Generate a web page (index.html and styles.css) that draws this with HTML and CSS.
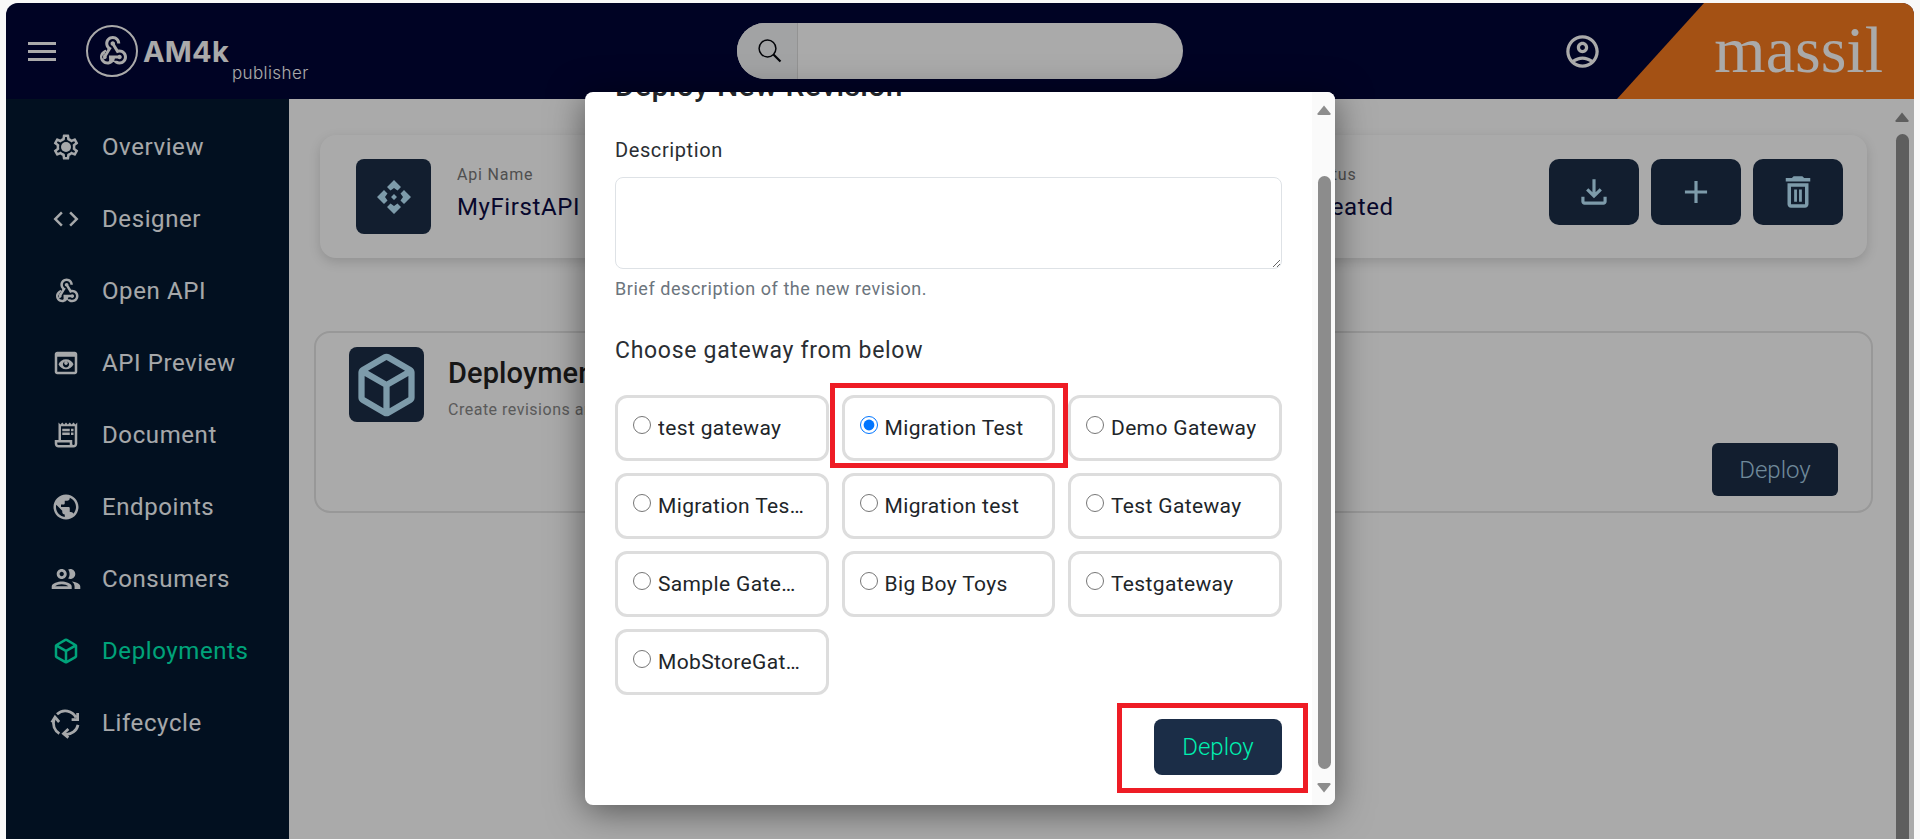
FILE: index.html
```html
<!DOCTYPE html>
<html lang="en">
<head>
  <meta charset="UTF-8" />
  <title>Deployments - AM4k publisher</title>
  <link rel="stylesheet" href="styles.css">
</head>
<body>
  <svg class="defs" width="0" height="0">
    <symbol id="i-webhook" viewBox="0 0 24 24"><path d="M10,15l5.88,0.01c0.27-0.31,0.67-0.51,1.12-0.51c0.83,0,1.5,0.67,1.5,1.5s-0.67,1.5-1.5,1.5c-0.44,0-0.84-0.19-1.12-0.5L13.95,17c-0.46,2.28-2.48,4-4.9,4C6.29,21,4,18.76,4,16c0-2.42,1.72-4.44,4-4.9v2.07c-1.16,0.41-2,1.53-2,2.83c0,1.65,1.35,3,3,3S10,17.65,10,16V15z M12.5,4c1.65,0,3,1.35,3,3h2c0-2.76-2.24-5-5-5l0,0c-2.76,0-5,2.24-5,5c0,1.43,0.6,2.71,1.55,3.62l-2.35,3.9C6.02,14.66,5.5,15.26,5.5,16c0,0.83,0.67,1.5,1.5,1.5s1.5-0.67,1.5-1.5c0-0.16-0.02-0.31-0.07-0.45l3.38-5.63C10.49,9.61,9.5,8.42,9.5,7C9.5,5.35,10.85,4,12.5,4z M17,13c-0.64,0-1.23,0.2-1.72,0.54l-3.05-5.07C11.53,8.35,11,7.74,11,7c0-0.83,0.67-1.5,1.5-1.5S14,6.17,14,7c0,0.15-0.02,0.29-0.06,0.43l2.19,3.65C16.41,11.03,16.7,11,17,11l0,0c2.76,0,5,2.24,5,5c0,2.76-2.24,5-5,5c-1.85,0-3.47-1.01-4.33-2.5h2.67C15.82,18.81,16.39,19,17,19c1.65,0,3-1.35,3-3S18.65,13,17,13z"/></symbol>
    <symbol id="i-cube" viewBox="0 -960 960 960"><path d="M440-183v-274L200-596v274l240 139Zm80 0 240-139v-274L520-457v274Zm-40-343 237-137-237-137-237 137 237 137ZM160-252q-19-11-29.5-29T120-321v-318q0-22 10.5-40t29.5-29l280-161q19-11 40-11t40 11l280 161q19 11 29.5 29t10.5 40v318q0 22-10.5 40T800-252L520-91q-19 11-40 11t-40-11L160-252Z"/></symbol>
    <symbol id="i-arrow" viewBox="0 0 14 10"><path d="M7 0.5 13.5 8.5Q14 10 12.5 10H1.500Q0 10 .5 8.500Z"/></symbol>
  </svg>

  <div class="app">
    <!-- Header -->
    <header class="topbar">
      <div class="brand">
        <div class="burger"><span></span><span></span><span></span></div>
        <div class="logo-ring"><svg class="logo-hook"><use href="#i-webhook"/></svg></div>
        <div class="logo-name">AM4k</div>
        <div class="logo-sub">publisher</div>
      </div>
      <div class="search">
        <div class="search-btn">
          <svg width="26" height="26" viewBox="0 0 26 26" fill="none" stroke="#05070d" stroke-width="1.5"><circle cx="10.500" cy="10.500" r="8.400"/><path d="M16.500 16.500l7 7" stroke-width="2.200"/></svg>
        </div>
        <div class="search-field"></div>
      </div>
      <div class="top-right">
        <svg class="user-icon" viewBox="0 0 24 24"><path d="M12 2C6.480 2 2 6.480 2 12s4.480 10 10 10 10-4.480 10-10S17.520 2 12 2zM7.350 18.500C8.660 17.560 10.260 17 12 17s3.340.56 4.650 1.500c-1.310.94-2.910 1.500-4.650 1.500s-3.340-.56-4.650-1.500zm10.790-1.380C16.450 15.800 14.320 15 12 15s-4.450.8-6.140 2.120C4.700 15.730 4 13.950 4 12c0-4.420 3.580-8 8-8s8 3.580 8 8c0 1.950-.7 3.730-1.860 5.120zM12 6c-1.930 0-3.500 1.570-3.500 3.500S10.070 13 12 13s3.500-1.570 3.500-3.500S13.930 6 12 6zm0 5c-.83 0-1.500-.67-1.500-1.500S11.170 8 12 8s1.500.67 1.500 1.500S12.830 11 12 11z"/></svg>
        <div class="company">massil</div>
      </div>
    </header>

    <div class="below">
      <!-- Sidebar -->
      <nav class="sidebar">
        <a class="nav-item"><svg viewBox="0 0 24 24"><path d="M19.430 12.980c.04-.32.07-.64.07-.98 0-.34-.03-.66-.07-.98l2.110-1.650c.19-.15.24-.42.12-.64l-2-3.460c-.09-.16-.26-.25-.44-.25-.06 0-.12.01-.17.03l-2.490 1c-.52-.4-1.080-.73-1.690-.98l-.38-2.650C14.460 2.180 14.250 2 14 2h-4c-.25 0-.46.18-.49.42l-.38 2.650c-.61.25-1.170.59-1.690.98l-2.490-1c-.06-.02-.12-.03-.18-.03-.17 0-.34.09-.43.25l-2 3.460c-.13.22-.07.49.12.64l2.110 1.650c-.04.32-.07.65-.07.98 0 .33.03.66.07.98l-2.110 1.650c-.19.15-.24.42-.12.64l2 3.460c.09.16.26.25.44.25.06 0 .12-.01.17-.03l2.490-1c.52.4 1.080.73 1.690.98l.38 2.650c.03.24.24.42.49.42h4c.25 0 .46-.18.49-.42l.38-2.650c.61-.25 1.170-.59 1.690-.98l2.490 1c.06.02.12.03.18.03.17 0 .34-.09.43-.25l2-3.460c.12-.22.07-.49-.12-.64l-2.110-1.650zm-1.980-1.710c.04.31.05.52.05.73 0 .21-.02.43-.05.73l-.14 1.130.89.7 1.080.84-.7 1.210-1.270-.51-1.040-.42-.9.68c-.43.32-.84.56-1.250.73l-1.060.43-.16 1.130-.2 1.350h-1.400l-.19-1.350-.16-1.130-1.060-.43c-.43-.18-.83-.41-1.230-.71l-.91-.7-1.060.43-1.270.51-.7-1.210 1.080-.84.89-.7-.14-1.130c-.03-.31-.05-.54-.05-.74s.02-.43.05-.73l.14-1.130-.89-.7-1.080-.84.7-1.210 1.270.51 1.040.42.9-.68c.43-.32.84-.56 1.250-.73l1.060-.43.16-1.130.2-1.350h1.390l.19 1.350.16 1.130 1.060.43c.43.18.83.41 1.230.71l.91.7 1.060-.43 1.270-.51.7 1.210-1.070.85-.89.7.14 1.130z"/><circle cx="12" cy="12" r="4"/></svg><span>Overview</span></a>
        <a class="nav-item"><svg viewBox="0 0 24 24"><path d="M9.400 16.600L4.800 12l4.600-4.600L8 6l-6 6 6 6 1.400-1.400zm5.200 0l4.600-4.600-4.600-4.600L16 6l6 6-6 6-1.400-1.400z"/></svg><span>Designer</span></a>
        <a class="nav-item"><svg viewBox="0 0 24 24"><use href="#i-webhook"/></svg><span>Open API</span></a>
        <a class="nav-item"><svg viewBox="0 0 24 24"><path d="M19 3H5c-1.110 0-2 .9-2 2v14c0 1.100.89 2 2 2h14c1.100 0 2-.9 2-2V5c0-1.100-.89-2-2-2zm0 16H5V7h14v12zm-5.500-7c0 .83-.67 1.500-1.500 1.500s-1.500-.67-1.500-1.500.67-1.500 1.500-1.500 1.500.67 1.500 1.500zM12 9c-2.730 0-5.060 1.660-6 4 .94 2.340 3.270 4 6 4s5.060-1.660 6-4c-.94-2.340-3.270-4-6-4zm0 6.500c-1.380 0-2.500-1.120-2.500-2.500s1.120-2.500 2.500-2.500 2.500 1.120 2.500 2.500-1.120 2.500-2.500 2.500z"/></svg><span>API Preview</span></a>
        <a class="nav-item"><svg viewBox="0 0 24 24"><path d="M19.500 3.500 18 2l-1.500 1.500L15 2l-1.500 1.500L12 2l-1.500 1.500L9 2 7.500 3.500 6 2v14H3v3c0 1.660 1.340 3 3 3h12c1.660 0 3-1.340 3-3V2l-1.500 1.500zM15 20H6c-.55 0-1-.45-1-1v-1h10v2zm4-1c0 .55-.45 1-1 1s-1-.45-1-1v-3H8V5h11v14z"/><path d="M9 7h6v2H9zM16 7h2v2h-2zM9 10h6v2H9zM16 10h2v2h-2z"/></svg><span>Document</span></a>
        <a class="nav-item"><svg viewBox="0 0 24 24"><path d="M12 2C6.480 2 2 6.480 2 12s4.480 10 10 10 10-4.480 10-10S17.520 2 12 2zm-1 17.930c-3.950-.49-7-3.850-7-7.930 0-.62.08-1.210.21-1.790L9 15v1c0 1.100.9 2 2 2v1.930zm6.900-2.540c-.26-.81-1-1.390-1.900-1.390h-1v-3c0-.55-.45-1-1-1H8v-2h2c.55 0 1-.45 1-1V7h2c1.100 0 2-.9 2-2v-.41c2.930 1.190 5 4.060 5 7.410 0 2.080-.8 3.970-2.100 5.390z"/></svg><span>Endpoints</span></a>
        <a class="nav-item"><svg viewBox="1.500 1.500 21 21"><path d="M9 13.750c-2.340 0-7 1.170-7 3.500V19h14v-1.750c0-2.330-4.660-3.500-7-3.500zM4.340 17c.84-.58 2.870-1.250 4.660-1.250s3.820.67 4.660 1.250H4.340zM9 12c1.930 0 3.500-1.570 3.500-3.500S10.930 5 9 5 5.500 6.570 5.500 8.500 7.070 12 9 12zm0-5c.83 0 1.500.67 1.500 1.500S9.830 10 9 10s-1.500-.67-1.500-1.500S8.170 7 9 7zm7.040 6.810c1.160.84 1.960 1.960 1.960 3.440V19h4v-1.750c0-2.020-3.500-3.170-5.960-3.440zM15 12c1.930 0 3.500-1.570 3.500-3.500S16.930 5 15 5c-.54 0-1.040.13-1.500.35.63.89 1 1.980 1 3.150s-.37 2.260-1 3.150c.46.22.96.35 1.500.35z"/></svg><span>Consumers</span></a>
        <a class="nav-item active"><svg viewBox="0 0 24 24"><use href="#i-cube"/></svg><span>Deployments</span></a>
        <a class="nav-item"><svg class="cycle" viewBox="0 0 24 24"><path d="M4.800 5A9.500 9.500 0 0 1 20 7.700M21.300 4v5.300h-4.800M21.600 13.500A9.500 9.500 0 0 1 11.500 21M13.900 16.800L10 20.500l3.900 3.200M6.700 20.500A9.500 9.500 0 0 1 2.500 9M.6 11.500l2.600-4.300 3.300 4"/></svg><span>Lifecycle</span></a>
      </nav>

      <!-- Main -->
      <main class="content">
        <section class="api-card">
          <div class="tile">
            <svg width="34" height="34" viewBox="0 0 34 34"><path d="M17 0l7 7-3.500 3.500L17 8l-3.500 2.500L10 7zM34 17l-7 7-3.500-3.500L26 17l-2.500-3.500L27 10zM17 34l-7-7 3.500-3.500L17 26l3.500-2.500L24 27zM0 17l7-7 3.500 3.500L8 17l2.500 3.500L7 24zM17 14l3 3-3 3-3-3z"/></svg>
          </div>
          <div class="api-col api-name"><label>Api Name</label><div>MyFirstAPI</div></div>
          <div class="api-col api-status"><label>Status</label><div>Created</div></div>
          <div class="api-actions">
            <button class="square-btn"><svg viewBox="0 0 24 24"><path d="M18 15v3H6v-3H4v3c0 1.100.9 2 2 2h12c1.100 0 2-.9 2-2v-3h-2zm-1-4-1.410-1.410L13 12.170V4h-2v8.170L8.410 9.590 7 11l5 5 5-5z"/></svg></button>
            <button class="square-btn"><svg viewBox="0 0 24 24"><path d="M19 13h-6v6h-2v-6H5v-2h6V5h2v6h6v2z"/></svg></button>
            <button class="square-btn"><svg viewBox="0 0 24 24"><path d="M6 19c0 1.100.9 2 2 2h8c1.100 0 2-.9 2-2V7H6v12zM8 9h8v10H8V9zm7.500-5-1-1h-5l-1 1H5v2h14V4h-3.500z"/><path d="M9.800 10.500h1.600v7H9.800zM12.600 10.500h1.600v7h-1.600z"/></svg></button>
          </div>
        </section>

        <section class="deploy-card">
          <div class="deploy-head">
            <div class="tile tile-cube"><svg width="76" height="76"><use href="#i-cube"/></svg></div>
            <div>
              <h2>Deployments</h2>
              <p>Create revisions and deploy them to the gateways</p>
            </div>
          </div>
          <button class="deploy-open">Deploy</button>
        </section>

        <svg class="sb-arrow main-arrow"><use href="#i-arrow"/></svg>
        <div class="main-thumb"></div>
      </main>
    </div>

    <div class="backdrop"></div>

    <!-- Dialog -->
    <div class="modal">
      <h3>Deploy New Revision</h3>
      <div class="field-label">Description</div>
      <textarea class="desc-input"></textarea>
      <div class="help-text">Brief description of the new revision.</div>
      <div class="choose-title">Choose gateway from below</div>

      <div class="gateways">
        <label class="gateway"><input type="radio" name="gw"><span>test gateway</span></label>
        <label class="gateway marked"><input type="radio" name="gw" checked><span>Migration Test</span></label>
        <label class="gateway"><input type="radio" name="gw"><span>Demo Gateway</span></label>
        <label class="gateway"><input type="radio" name="gw"><span>Migration Test Gateway</span></label>
        <label class="gateway"><input type="radio" name="gw"><span>Migration test</span></label>
        <label class="gateway"><input type="radio" name="gw"><span>Test Gateway</span></label>
        <label class="gateway"><input type="radio" name="gw"><span>Sample Gateway</span></label>
        <label class="gateway"><input type="radio" name="gw"><span>Big Boy Toys</span></label>
        <label class="gateway"><input type="radio" name="gw"><span>Testgateway</span></label>
        <label class="gateway"><input type="radio" name="gw"><span>MobStoreGateway</span></label>
      </div>

      <div class="modal-foot">
        <button class="deploy-confirm">Deploy</button>
      </div>

      <div class="modal-track">
        <svg class="sb-arrow"><use href="#i-arrow"/></svg>
        <div class="modal-thumb"></div>
        <svg class="sb-arrow flip"><use href="#i-arrow"/></svg>
      </div>
    </div>
  </div>
</body>
</html>
```

FILE: styles.css
```css
* {
  box-sizing: border-box;
}

html, body {
  height: 100%;
}

body {
  margin: 0;
  padding: 3px 6px 0;
  background-color: #f8f8f8;
  font-family: "Roboto", sans-serif;
  overflow: hidden;
}

.defs {
  position: absolute;
}

.app {
  position: relative;
  height: 836px;
  display: flex;
  flex-direction: column;
  border-radius: 12px 12px 0 0;
  overflow: hidden;
}

/* Header */
.topbar {
  height: 96px;
  flex: none;
  display: grid;
  grid-template-columns: 731px 446px 1fr;
  align-items: center;
  background-color: #000536;
}

.brand {
  height: 96px;
  display: flex;
  align-items: center;
  padding-left: 22px;
  color: #fff;
}

.burger {
  width: 28px;
  display: flex;
  flex-direction: column;
  gap: 5px;
}

.burger span {
  height: 3px;
  background-color: #fff;
}

.logo-ring {
  width: 52px;
  height: 52px;
  margin-left: 30px;
  border: 2.500px solid #fff;
  border-radius: 50%;
  display: flex;
  align-items: center;
  justify-content: center;
}

.logo-hook {
  width: 36px;
  height: 36px;
  fill: #fff;
}

.logo-name {
  margin-left: 5px;
  font-family: "Inter", sans-serif;
  font-size: 29px;
  font-weight: 700;
  letter-spacing: 0.2px;
}

.logo-sub {
  align-self: flex-end;
  margin: 0 0 16px 3px;
  font-family: "Inter", sans-serif;
  font-size: 17px;
  font-weight: 300;
  letter-spacing: 0.4px;
}

.search {
  height: 56px;
  display: flex;
  border-radius: 28px;
  overflow: hidden;
  background-color: #fff;
}

.search-btn {
  width: 61px;
  display: flex;
  align-items: center;
  justify-content: center;
  padding-left: 5px;
  background-color: #f3f5f7;
  border-right: 1px solid #ddd;
}

.search-field {
  flex: 1;
}

.top-right {
  height: 96px;
  display: flex;
  justify-content: flex-end;
  align-items: center;
}

.user-icon {
  width: 39px;
  height: 39px;
  margin-right: 15px;
  fill: #fff;
}

.company {
  width: 297px;
  height: 96px;
  padding: 9px 31px 0 0;
  text-align: right;
  color: #fff;
  background-color: #f77a1e;
  font-family: "Liberation Serif", serif;
  font-size: 66px;
  line-height: 76px;
  clip-path: polygon(87px 0, 100% 0, 100% 100%, 0 100%);
}

/* Sidebar */
.below {
  flex: 1;
  display: flex;
  min-height: 0;
}

.sidebar {
  width: 283px;
  flex: none;
  padding-top: 12px;
  background-color: #031831;
  overflow: hidden;
}

.nav-item {
  height: 72px;
  display: flex;
  align-items: center;
  padding-left: 45px;
  color: #fafdff;
  font-size: 24px;
  letter-spacing: 0.6px;
  white-space: nowrap;
}

.nav-item svg {
  width: 30px;
  height: 30px;
  flex: none;
  fill: currentColor;
  margin-right: 21px;
}

.nav-item svg.cycle {
  fill: none;
  stroke: currentColor;
  stroke-width: 2.200;
  overflow: visible;
}

.nav-item.active {
  color: #00f5b8;
}

/* Main */
.content {
  position: relative;
  flex: 1;
  padding: 36px 0 0 25px;
  background-color: #fff;
  overflow: hidden;
}

.api-card {
  width: 1547px;
  height: 123px;
  margin-left: 6px;
  padding: 24px 24px 0 36px;
  display: flex;
  background-color: #fff;
  border-radius: 16px;
  box-shadow: 0 4px 12px rgba(0, 0, 0, 0.15);
}

.tile {
  width: 75px;
  height: 75px;
  flex: none;
  display: flex;
  align-items: center;
  justify-content: center;
  background-color: #1b2d47;
  border-radius: 8px;
}

.tile svg {
  fill: #bce9ff;
}

.api-col label {
  display: block;
  margin-top: 6px;
  color: #777;
  font-size: 16px;
  letter-spacing: 0.8px;
}

.api-col div {
  margin-top: 9px;
  color: #0c0c44;
  font-size: 24px;
  letter-spacing: 0.6px;
}

.api-name {
  flex: 1;
  padding-left: 26px;
}

.api-status {
  width: 243px;
}

.api-actions {
  display: flex;
  gap: 12px;
}

.square-btn {
  width: 90px;
  height: 66px;
  padding: 0;
  display: flex;
  align-items: center;
  justify-content: center;
  border: none;
  border-radius: 10px;
  background-color: #1b2d47;
}

.square-btn svg {
  width: 38px;
  height: 38px;
  fill: #bce9ff;
}

.square-btn:last-child svg {
  width: 42px;
  height: 42px;
}

.deploy-card {
  width: 1559px;
  height: 182px;
  margin-top: 73px;
  padding: 14px 33px 15px 33px;
  display: flex;
  flex-direction: column;
  justify-content: space-between;
  border: 2px solid #e4e4e4;
  border-radius: 16px;
}

.deploy-head {
  display: flex;
  gap: 24px;
}

.deploy-head h2 {
  margin: 9px 0 0;
  color: #222;
  font-size: 29px;
  font-weight: 500;
  letter-spacing: 0.1px;
}

.deploy-head p {
  margin: 10px 0 0;
  color: #888;
  font-size: 16px;
  letter-spacing: 0.5px;
}

.deploy-open {
  align-self: flex-end;
  width: 126px;
  height: 53px;
  border: none;
  border-radius: 6px;
  background-color: #1b2d47;
  color: #a9d0e6;
  font-family: inherit;
  font-size: 24px;
  font-weight: 300;
}

.sb-arrow {
  display: block;
  flex: none;
  width: 14px;
  height: 10px;
  fill: #8d8d8d;
}

.sb-arrow.flip {
  transform: scaleY(-1);
}

.main-arrow {
  position: absolute;
  top: 13px;
  right: 5px;
}

.main-thumb {
  position: absolute;
  top: 35px;
  bottom: 0;
  right: 5px;
  width: 13px;
  border-radius: 7px 7px 0 0;
  background-color: #8d8d8d;
}

/* Dialog */
.backdrop {
  position: absolute;
  inset: 0;
  background-color: rgba(0, 0, 0, 0.333);
}

.modal {
  position: absolute;
  left: 579px;
  top: 89px;
  width: 750px;
  height: 713px;
  padding: 0 53px 0 30px;
  background-color: #fff;
  border-radius: 8px;
  box-shadow: 0 6px 36px rgba(0, 0, 0, 0.5);
  overflow: hidden;
}

.modal h3 {
  margin: -24px 0 0;
  color: #212529;
  font-size: 30px;
  font-weight: 500;
  line-height: 36px;
  letter-spacing: 0.4px;
}

.field-label {
  margin-top: 34px;
  color: #2a2e33;
  font-size: 20px;
  line-height: 24px;
  letter-spacing: 0.6px;
}

.desc-input {
  display: block;
  width: 100%;
  height: 92px;
  margin-top: 15px;
  border: 1px solid #dee2e6;
  border-radius: 8px;
  outline: none;
}

.help-text {
  margin-top: 9px;
  color: #6c757d;
  font-size: 18px;
  line-height: 22px;
  letter-spacing: 0.55px;
}

.choose-title {
  margin-top: 37px;
  color: #2a2e33;
  font-size: 23px;
  line-height: 28px;
  letter-spacing: 0.7px;
}

.gateways {
  margin-top: 30px;
  display: grid;
  grid-template-columns: repeat(3, 213.5px);
  grid-auto-rows: 66px;
  gap: 12px 13px;
}

.gateway {
  position: relative;
  display: flex;
  padding: 17px 20px 0 15px;
  border: 3px solid #ddd;
  border-radius: 12px;
  color: #212529;
  font-size: 21px;
  line-height: 26px;
  letter-spacing: 0.35px;
}

.gateway input {
  width: 18px;
  height: 18px;
  flex: none;
  margin: 1px 7px 0 0;
}

.gateway span {
  overflow: hidden;
  white-space: nowrap;
  text-overflow: ellipsis;
}

.gateway.marked::after {
  content: "";
  position: absolute;
  inset: -15px -16px -10px -15px;
  border: 5px solid #ee1c25;
}

.modal-foot {
  margin-top: 24px;
  display: flex;
  justify-content: flex-end;
}

.deploy-confirm {
  position: relative;
  width: 128px;
  height: 56px;
  border: none;
  border-radius: 8px;
  background-color: #1b2d47;
  color: #00f0b0;
  font-family: inherit;
  font-size: 24px;
  font-weight: 300;
}

.deploy-confirm::after {
  content: "";
  position: absolute;
  inset: -16px -26px -18px -37px;
  border: 5px solid #ee1c25;
}

.modal-track {
  position: absolute;
  top: 0;
  right: 0;
  bottom: 0;
  width: 23px;
  padding: 13px 4px 12px 5px;
  display: flex;
  flex-direction: column;
  align-items: center;
  background-color: #fafafa;
}

.modal-thumb {
  flex: 1;
  width: 13px;
  margin: 61px 0 14px;
  border-radius: 7px;
  background-color: #8c8c8c;
}
```
